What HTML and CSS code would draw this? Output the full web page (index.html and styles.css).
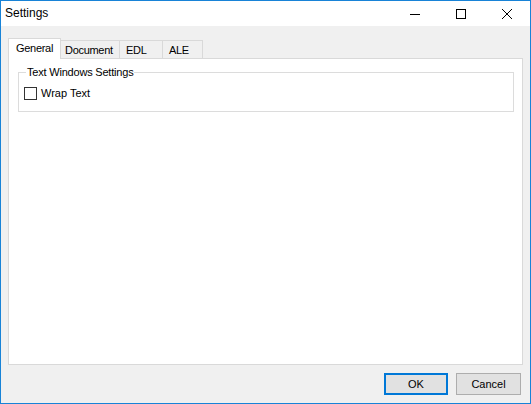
FILE: index.html
```html
<!DOCTYPE html>
<html>
<head>
<meta charset="utf-8">
<title>Settings</title>
<link rel="stylesheet" href="styles.css">
</head>
<body>
<div class="window">
  <div class="titlebar">
    <div class="title">Settings</div>
    <div class="caption">
      <div class="cap-btn"><svg width="10" height="10" viewBox="0 0 10 10"><path d="M0 5.5H10" stroke="#000" stroke-width="1" fill="none"/></svg></div>
      <div class="cap-btn"><svg width="10" height="10" viewBox="0 0 10 10"><rect x="0.5" y="0.5" width="9" height="9" stroke="#000" stroke-width="1" fill="none"/></svg></div>
      <div class="cap-btn"><svg width="10" height="10" viewBox="0 0 10 10"><path d="M0 0L10 10M10 0L0 10" stroke="#000" stroke-width="1" fill="none"/></svg></div>
    </div>
  </div>
  <div class="client">
    <div class="tabs">
      <div class="tab tab-general selected">General</div>
      <div class="tab tab-document">Document</div>
      <div class="tab tab-edl">EDL</div>
      <div class="tab tab-ale">ALE</div>
    </div>
    <div class="panel">
      <fieldset class="group">
        <legend class="group-label">Text Windows Settings</legend>
        <label class="check-row"><span class="checkbox"></span><span class="check-text">Wrap Text</span></label>
      </fieldset>
    </div>
    <div class="footer">
      <button class="btn btn-ok">OK</button>
      <button class="btn btn-cancel">Cancel</button>
    </div>
  </div>
</div>
</body>
</html>
```
FILE: styles.css
```css
html, body {
  margin: 0;
  padding: 0;
  background: #ffffff;
}
body {
  font-family: "Liberation Sans", Arial, sans-serif;
  font-size: 11px;
  color: #000;
}
.window {
  width: 531px;
  height: 404px;
  box-sizing: border-box;
  border: 1px solid #1883d7;
  display: flex;
  flex-direction: column;
  background: #f0f0f0;
}
.titlebar {
  height: 25px;
  background: #fff;
  display: flex;
  align-items: center;
  flex: none;
}
.title {
  flex: 1;
  padding-left: 4px;
  font-size: 12px;
  line-height: 25px;
}
.caption {
  display: flex;
  height: 25px;
}
.cap-btn {
  width: 46px;
  height: 25px;
  display: flex;
  align-items: center;
  justify-content: center;
}
.cap-btn svg { display: block; }
.client {
  flex: 1;
  display: flex;
  flex-direction: column;
  padding: 12px 7px 0 7px;
  min-height: 0;
}
.tabs {
  display: flex;
  align-items: flex-end;
  height: 20px;
  flex: none;
}
.tab {
  box-sizing: border-box;
  height: 18px;
  border: 1px solid #d9d9d9;
  border-bottom: none;
  background: #f0f0f0;
  line-height: 13px;
  padding-top: 3px;
  padding-left: 6px;
  text-align: left;
  letter-spacing: -0.3px;
  margin-left: -1px;
  white-space: nowrap;
}
.tab.selected {
  height: 21px;
  margin-bottom: -1px;
  background: #fff;
  position: relative;
  z-index: 1;
  margin-left: 0;
  padding-top: 3px;
  padding-left: 7px;
}
.tab-general { width: 53px; }
.tab-document { width: 60px; padding-left: 4px; }
.tab-edl { width: 44px; }
.tab-ale { width: 41px; }
.panel {
  height: 307px;
  box-sizing: border-box;
  border: 1px solid #d9d9d9;
  background: #fff;
  padding: 0 8px 0 9px;
  flex: none;
}
.group {
  margin: 7px 0 0 0;
  padding: 0 0 11px 0;
  border: 1px solid #dcdcdc;
  min-width: 0;
}
.group-label {
  margin-left: 7px;
  padding: 0 1px;
  line-height: 13px;
  letter-spacing: -0.2px;
}
.check-row {
  display: flex;
  align-items: center;
  margin: 8px 0 0 5px;
  height: 13px;
}
.checkbox {
  width: 13px;
  height: 13px;
  box-sizing: border-box;
  border: 1px solid #333;
  background: #fff;
  flex: none;
}
.check-text {
  margin-left: 4px;
  line-height: 13px;
}
.footer {
  display: flex;
  justify-content: flex-end;
  gap: 8px;
  padding: 8px 2px 0 0;
}
.btn {
  height: 22px;
  box-sizing: border-box;
  border: 1px solid #adadad;
  background: #e1e1e1;
  font-family: "Liberation Sans", Arial, sans-serif;
  font-size: 11px;
  color: #000;
  padding: 0;
  margin: 0;
  line-height: 18px;
}
.btn-ok {
  width: 64px;
  border: 2px solid #0078d7;
}
.btn-cancel {
  width: 65px;
}
```
